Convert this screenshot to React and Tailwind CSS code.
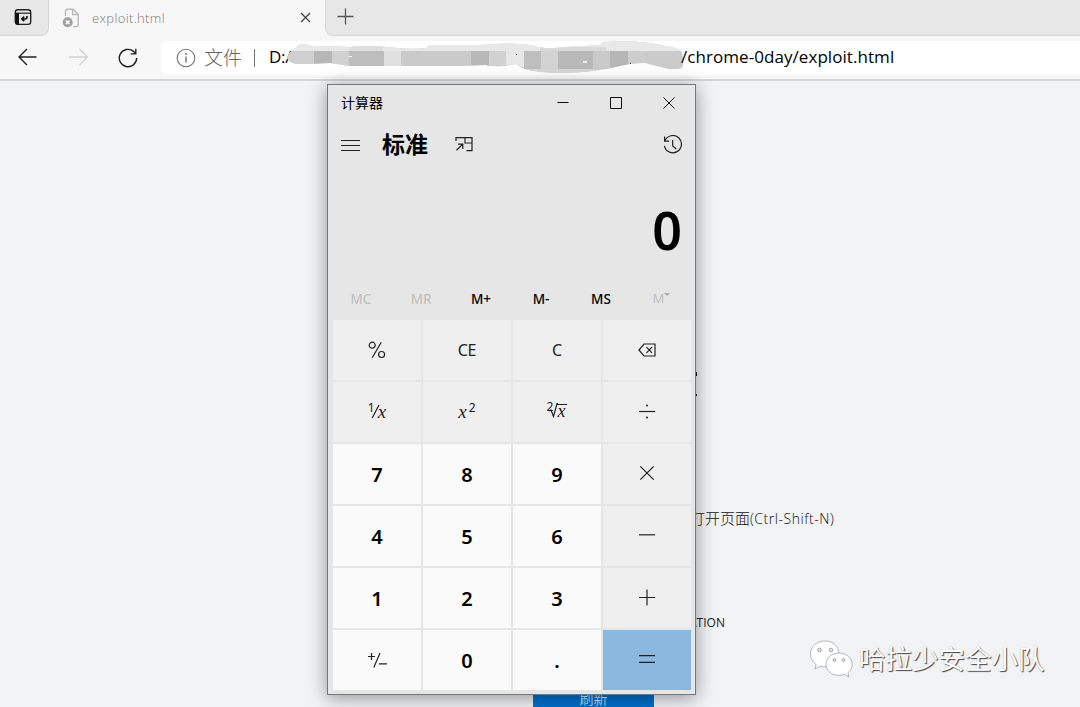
import React from "react";

const ui = "font-['Open_Sans','Noto_Sans_CJK_SC',sans-serif]";
const num = "font-['Noto_Sans','Noto_Sans_CJK_SC',sans-serif]";

function TabBar() {
  return (
    <div className="flex h-9 bg-[#e7e7e7]">
      <div className="flex w-[50px] items-start bg-[#f7f7f7]">
        <div className="flex h-9 w-[49px] items-center justify-center rounded-br-lg border-r border-b border-[#d6d6d6] bg-[#e7e7e7] pr-0.5 pb-0.5">
          <svg width="18" height="18" viewBox="0 0 18 18" fill="none">
            <rect x="1.3" y="1.8" width="15.4" height="14.6" rx="2.6" stroke="#222" strokeWidth="1.4" />
            <path d="M1.5 5.2H16.5" stroke="#222" strokeWidth="1.2" />
            <path d="M1.3 5H5V16.4H3.5Q1.3 16.4 1.3 14Z" fill="#111" />
            <path d="M13 8V9Q13 11 11 11H8.2M10.2 8.6L7.8 11L10.2 13.2" stroke="#111" strokeWidth="1.6" />
          </svg>
        </div>
      </div>
      <div className="flex w-[275px] items-center bg-[#f7f7f7] pb-px pl-3">
        <svg width="18" height="20" viewBox="0 0 18 20" fill="none">
          <path d="M3.5 8V3Q3.5 1.2 5.3 1.2H10.8L16.2 6.2V17Q16.2 18.6 14.5 18.6H11" stroke="#b8b8b8" strokeWidth="1.4" />
          <path d="M10.6 1.5V6.5H16" stroke="#b8b8b8" strokeWidth="1.3" />
          <circle cx="5.7" cy="14.3" r="5" fill="#a0a0a0" />
          <path d="M3.9 12.5L7.5 16.1M7.5 12.5L3.9 16.1" stroke="#fff" strokeWidth="1.5" />
        </svg>
        <span className={`${ui} ml-3 text-[13px] leading-5 font-light tracking-[0.35px] text-[#777]`}>exploit.html</span>
        <svg className="mr-3.5 ml-auto" width="11" height="11" viewBox="0 0 11 11">
          <path d="M1 1L10 10M10 1L1 10" stroke="#444" strokeWidth="1.3" />
        </svg>
      </div>
      <div className="flex flex-1 bg-[#f7f7f7]">
        <div className="flex flex-1 items-center rounded-bl-lg border-b border-l border-[#d6d6d6] bg-[#e7e7e7] pb-0.5 pl-[11px]">
          <svg width="17" height="17" viewBox="0 0 17 17">
            <path d="M8.5 .5V16.5M.5 8.5H16.5" stroke="#555" strokeWidth="1.3" />
          </svg>
        </div>
      </div>
    </div>
  );
}

function Smudge() {
  return (
    <svg className="-mt-0.5 -ml-1 shrink-0" width="400" height="32" viewBox="286 42 400 32">
      <defs>
        <clipPath id="stroke">
          <path d="M287 58Q290 52 295 50Q300 43 308 46Q315 49 324 47L350 48Q370 46 388 48Q410 51 426 49L430 46L480 46Q510 43 530 46Q545 51 565 48L600 46L603 43Q630 41 650 44L672 48Q683 50 683 58V66Q683 70 677 70H669Q655 67 645 64Q630 64 620 67Q595 73 565 74Q535 74 522 69L516 65Q500 69 485 66L455 67H350L330 64L306 65Q288 66 287 58Z" />
        </clipPath>
      </defs>
      <g clipPath="url(#stroke)" shapeRendering="crispEdges">
        <rect x="286" y="40" width="400" height="36" fill="#cbcbcb" />
        <rect x="286" y="40" width="400" height="12" fill="#e8e8e8" />
        <rect x="349" y="47" width="34" height="5" fill="#dedede" />
        <rect x="540" y="48" width="66" height="4" fill="#dadada" />
        <rect x="286" y="52" width="28" height="16" fill="#cfcfcf" />
        <rect x="314" y="52" width="18" height="16" fill="#b7b7b7" />
        <rect x="332" y="52" width="17" height="16" fill="#d1d1d1" />
        <rect x="349" y="52" width="35" height="16" fill="#bdbdbd" />
        <rect x="384" y="52" width="17" height="16" fill="#e0e0e0" />
        <rect x="401" y="52" width="70" height="16" fill="#cacaca" />
        <rect x="471" y="52" width="18" height="16" fill="#b8b8b8" />
        <rect x="489" y="52" width="17" height="16" fill="#d1d1d1" />
        <rect x="506" y="52" width="18" height="16" fill="#e7e7e7" />
        <rect x="524" y="52" width="17" height="18" fill="#bfbfbf" />
        <rect x="541" y="52" width="17" height="18" fill="#d3d3d3" />
        <rect x="558" y="52" width="35" height="18" fill="#b9b9b9" />
        <rect x="593" y="52" width="17" height="18" fill="#cacaca" />
        <rect x="610" y="52" width="18" height="18" fill="#b6b6b6" />
        <rect x="628" y="52" width="17" height="18" fill="#cdcdcd" />
        <rect x="524" y="70" width="70" height="4" fill="#d8d8d8" />
      </g>
      <g shapeRendering="crispEdges">
        <rect x="349" y="57" width="3" height="1" fill="#fff" />
        <rect x="583" y="62" width="4" height="2" fill="#eee" />
        <rect x="516" y="55" width="1" height="1" fill="#222" />
        <rect x="630" y="64" width="1" height="1" fill="#444" />
      </g>
    </svg>
  );
}

function Toolbar() {
  return (
    <div className="flex h-[45px] items-start border-b-2 border-[#d5d5d5] bg-[#f7f7f7] pt-[5px] pl-[18px]">
      <div className="flex h-8 w-[143px] shrink-0 items-center">
        <svg width="20" height="18" viewBox="0 0 20 18" fill="none" stroke="#222" strokeWidth="1.4">
          <path d="M9 1L1 9L9 17M1 9H18.5" />
        </svg>
        <svg className="ml-[31px]" width="20" height="18" viewBox="0 0 20 18" fill="none" stroke="#d2d2d2" strokeWidth="1.3">
          <path d="M10.5 1L18.5 9L10.5 17M18.5 9H0" />
        </svg>
        <svg className="mt-px ml-[29px]" width="21" height="20" viewBox="0 0 21 20" fill="none" stroke="#222" strokeWidth="1.4">
          <path d="M18.7 10A8.7 8.7 0 1 1 15.6 3.4L17.8 5.6M17.8 .8V5.9H12.7" />
        </svg>
      </div>
      <div className="flex h-[34px] flex-1 items-center rounded-l-md bg-white pb-px pl-[15px]">
        <svg width="20" height="20" viewBox="0 0 20 20" fill="none">
          <circle cx="10" cy="10" r="8.8" stroke="#767676" strokeWidth="1.1" />
          <path d="M10 8.4V14.5" stroke="#666" strokeWidth="1.3" />
          <circle cx="10" cy="6" r=".9" fill="#666" />
        </svg>
        <span className={`${ui} ml-2 w-[38px] shrink-0 text-[19px] leading-8 font-light text-[#666]`}>文件</span>
        <div className="ml-3 h-[18px] w-px shrink-0 bg-[#777]" />
        <span className={`${ui} -mt-px ml-3.5 w-[21px] shrink-0 text-[17px] leading-8 tracking-[-0.3px] text-black`}>D:/</span>
        <Smudge />
        <span className={`${ui} -mt-px -ml-[5px] text-[17px] leading-8 tracking-[0.06px] whitespace-nowrap text-black`}>/chrome-0day/exploit.html</span>
      </div>
    </div>
  );
}

function WeChat() {
  return (
    <svg width="46" height="40" viewBox="0 0 46 40">
      <g fill="#fff" stroke="#999" strokeWidth=".7">
        <path d="M16 2C7.5 2 1.5 7.8 1.5 15.2C1.5 19.6 3.8 23.3 7.2 25.4L5.8 30L11 27.3C20 29.7 30 24.3 30 15.2C30 7.8 24.5 2 16 2Z" />
        <path d="M30 14C22.7 14 17 19 17 25.3C17 31.7 22.6 36.4 30 36.4Q33 36.4 35.2 35.4L40 38L38.8 33.8C41.6 31.9 43.2 28.8 43.2 25.3C43.2 19 37.3 14 30 14Z" />
      </g>
      <g fill="#e4e4e4" stroke="#888" strokeWidth=".7">
        <circle cx="10.5" cy="11" r="1.8" />
        <circle cx="22" cy="11" r="1.8" />
        <circle cx="25.5" cy="21" r="1.4" />
        <circle cx="34.5" cy="21" r="1.4" />
      </g>
    </svg>
  );
}

function Page() {
  return (
    <main className="flex h-[626px] flex-col overflow-hidden bg-[#f1f3f5]">
      <div className="flex flex-col gap-[18px] pt-[291px] pl-[694px]">
        <i className="h-1 w-[3px] bg-black" />
        <i className="h-0.5 w-[3px] bg-black" />
      </div>
      <p className={`${ui} mt-[108px] pl-[690px] text-[15px] leading-7 font-light text-[#111]`}>
        打开页面<span className="text-[14px] tracking-[0.55px]">(Ctrl-Shift-N)</span>
      </p>
      <p className={`${ui} mt-[80px] pl-[689px] text-[12px] leading-5 text-[#222]`}>ATION</p>
      <div className="-mt-px flex h-[53px] shrink-0 items-center pl-[809px]">
        <WeChat />
        <span className={`${ui} ml-1 text-[26.5px] leading-9 whitespace-nowrap text-white [text-shadow:1px_1px_1px_#444,0_0_1px_#aaa]`}>哈拉少安全小队</span>
      </div>
      <button className={`${ui} ml-[533px] h-12 w-[121px] shrink-0 bg-[#0071ce] pb-5 text-[14px] leading-5 font-light text-white`}>刷新</button>
    </main>
  );
}

const icon = { fill: "none", stroke: "#222", strokeWidth: 1.2 };

const icons = {
  percent: (
    <svg width="18" height="18" viewBox="0 0 18 18" {...icon}>
      <circle cx="4.2" cy="4.2" r="3" /><circle cx="13.6" cy="13.5" r="3" /><path d="M13.3 1.2L4.2 16.8" />
    </svg>
  ),
  back: (
    <svg width="18" height="14" viewBox="0 0 18 14" {...icon}>
      <path d="M6 1H17V13H6L.9 7ZM8.5 4.2L14 9.8M14 4.2L8.5 9.8" />
    </svg>
  ),
  divide: (
    <svg width="18" height="16" viewBox="0 0 18 16" {...icon}>
      <path d="M1 7.5H17" /><circle cx="9" cy="1.5" r="1" fill="#222" stroke="none" /><circle cx="9" cy="13.5" r="1" fill="#222" stroke="none" />
    </svg>
  ),
  times: (
    <svg width="16" height="18" viewBox="0 0 16 18" {...icon}><path d="M1.3 1.3L14.7 14.7M14.7 1.3L1.3 14.7" /></svg>
  ),
  minus: (
    <svg width="18" height="18" viewBox="0 0 18 18" {...icon}><path d="M1 7.8H17" /></svg>
  ),
  plus: (
    <svg width="18" height="18" viewBox="0 0 18 18" {...icon}><path d="M1 8.5H17M9 .5V16.5" /></svg>
  ),
  equals: (
    <svg width="18" height="18" viewBox="0 0 18 18" {...icon}><path d="M1 4.7H17M1 11.3H17" /></svg>
  ),
};

const mathX = "font-['Liberation_Serif',serif] italic";

const keys = [
  { face: icons.percent },
  { face: <span className="text-[16px] tracking-[-0.3px]">CE</span> },
  { face: <span className="text-[16px]">C</span> },
  { face: icons.back },
  { face: (
    <span className="flex items-center">
      <span className="-mt-2 text-[12px]">1</span>
      <svg className="-mt-px -ml-1" width="9" height="15" viewBox="0 0 9 15" {...icon}><path d="M8 1L1.2 14" /></svg>
      <span className={`${mathX} -ml-0.5 text-[19px] leading-5`}>x</span>
    </span>
  ) },
  { face: (
    <span className="flex items-center">
      <span className={`${mathX} text-[19px] leading-5`}>x</span>
      <span className="-mt-2 ml-0.5 text-[12px]">2</span>
    </span>
  ) },
  { face: (
    <span className="-mt-1 flex items-center">
      <span className="-mt-1.5 text-[12px]">2</span>
      <span className="-ml-1 flex items-center">
        <svg width="9" height="16" viewBox="0 0 9 16" {...icon}><path d="M.5 9L2 8L4.5 14.5L8 1.6H9" /></svg>
        <span className={`${mathX} mt-0.5 -ml-px h-[15px] border-t border-[#222] pr-0.5 text-[18px] leading-[13px]`}>x</span>
      </span>
    </span>
  ) },
  { face: icons.divide },
  { digit: "7" }, { digit: "8" }, { digit: "9" }, { face: icons.times },
  { digit: "4" }, { digit: "5" }, { digit: "6" }, { face: icons.minus },
  { digit: "1" }, { digit: "2" }, { digit: "3" }, { face: icons.plus },
  { light: true, face: (
    <svg width="20" height="17" viewBox="0 0 20 17" {...icon}><path d="M1 4.5H8M4.5 1V8M13 1L6.8 15.5M12 11.8H20" /></svg>
  ) },
  { digit: "0" }, { digit: "." }, { face: icons.equals, accent: true },
];

function Key({ face, digit, light, accent }) {
  const tone = accent ? "bg-[#8ab8df]" : digit || light ? "bg-[#fafafa]" : "bg-[#efefef]";
  return (
    <button className={`${tone} ${num} flex items-center justify-center text-[#222]`}>
      {digit ? <span className="mt-0.5 text-[20px] leading-7 font-semibold text-black">{digit}</span> : face}
    </button>
  );
}

const memory = [["MC", false], ["MR", false], ["M+", true], ["M-", true], ["MS", true]];

function Calculator() {
  return (
    <section className={`${num} absolute top-[84px] left-[327px] flex h-[611px] w-[369px] flex-col border border-[#777] bg-[#e6e6e6] shadow-[0_3px_18px_rgba(0,0,0,0.4)]`}>
      <header className="flex h-9 items-center pl-[13px]">
        <span className="text-[14px] leading-5 text-black">计算器</span>
        <div className="mr-5 ml-auto flex items-center gap-[41px]">
          <svg width="12" height="12" viewBox="0 0 12 12" stroke="#111"><path d="M.5 5.5H11.5" /></svg>
          <svg width="12" height="12" viewBox="0 0 12 12" stroke="#111" fill="none"><path d="M.5 .5H11.5V11.5H.5Z" /></svg>
          <svg width="12" height="12" viewBox="0 0 12 12" stroke="#111"><path d="M.5 .5L11.5 11.5M11.5 .5L.5 11.5" /></svg>
        </div>
      </header>
      <div className="flex h-12 items-center pb-px pl-[13px]">
        <svg width="19" height="12" viewBox="0 0 19 12" stroke="#222"><path d="M0 1.5H19M0 6.5H19M0 11.5H19" /></svg>
        <h1 className="-mt-px ml-[22px] text-[23px] leading-8 font-bold text-black">标准</h1>
        <svg className="-mt-px ml-[27px]" width="18" height="16" viewBox="0 0 18 16" {...icon}>
          <path d="M1 5V1.6H17V14.6H11.5M10 1.6V7H17M1.5 14.2L7.6 8.3M3 8.2H7.8V13" />
        </svg>
        <svg className="mr-3 ml-auto" width="20" height="20" viewBox="0 0 20 20" {...icon}>
          <path d="M2 5.6A8.6 8.6 0 1 1 1.4 10.8M1.6 1.6V6.2H6.2M9.7 5V11L13.3 14" />
        </svg>
      </div>
      <output className="flex h-[121px] items-start justify-end pt-[25px] pr-[13px] text-[52px] leading-[72px] font-semibold text-black">0</output>
      <div className="ml-[3px] flex h-[30px] w-[361px] items-start">
        {memory.map(([label, on]) => (
          <button key={label} className={`w-[60px] text-center text-[13.5px] leading-[19px] ${on ? "font-medium text-black" : "text-[#bdbdbd]"}`}>{label}</button>
        ))}
        <button className="flex flex-1 items-start justify-center text-[13px] leading-[17px] text-[#bdbdbd]">
          M<svg className="mt-[3px]" width="6" height="4" viewBox="0 0 6 4"><path d="M0 0H6L3 3Z" fill="#aaa" /></svg>
        </button>
      </div>
      <div className="ml-[5px] grid h-[370px] w-[358px] grid-cols-4 grid-rows-6 gap-0.5">
        {keys.map((key, i) => <Key key={i} {...key} />)}
      </div>
    </section>
  );
}

export default function App() {
  return (
    <div className="relative h-[707px] w-[1080px] overflow-hidden">
      <TabBar />
      <Toolbar />
      <Page />
      <Calculator />
    </div>
  );
}
